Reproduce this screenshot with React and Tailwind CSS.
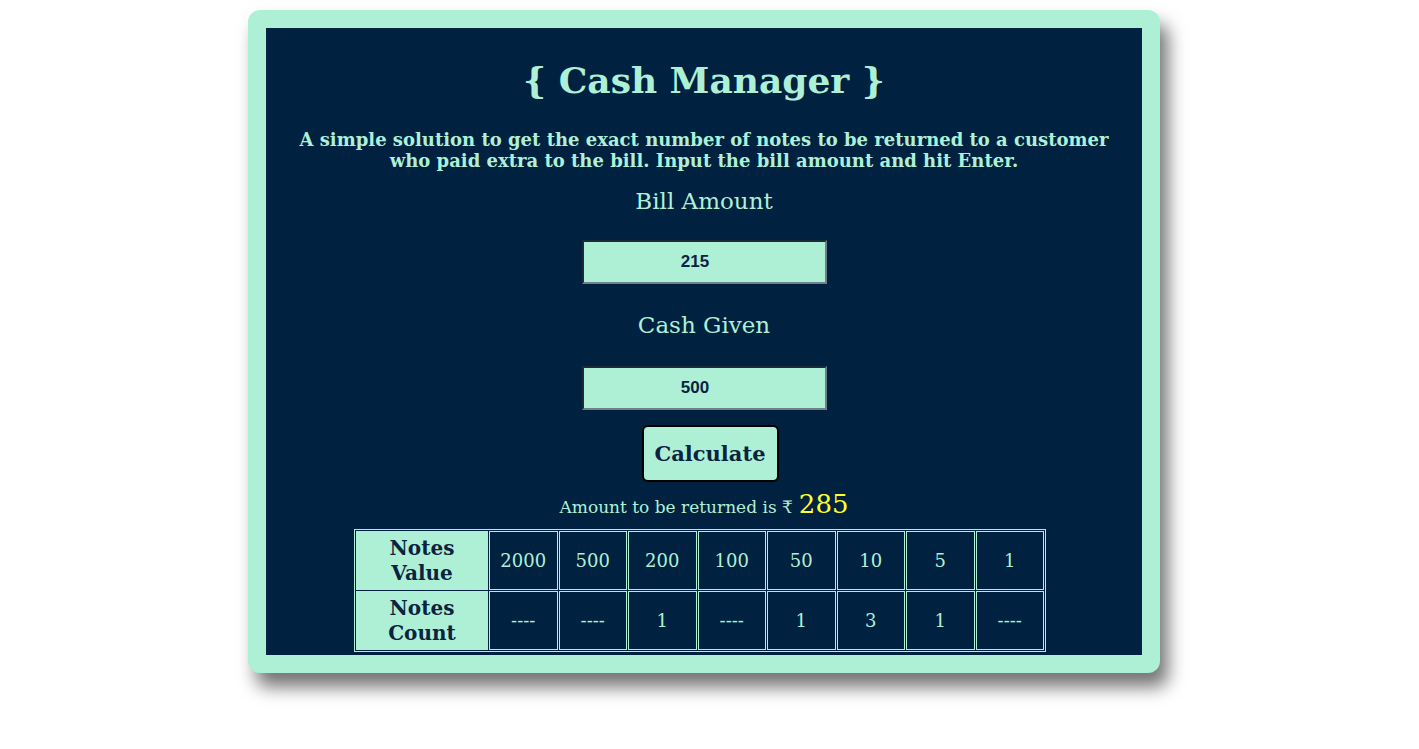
const notes = [2000, 500, 200, 100, 50, 10, 5, 1];
const counts = ["----", "----", "1", "----", "1", "3", "1", "----"];

function NumberInput({ value }) {
  return (
    <input
      type="text"
      defaultValue={value}
      className="w-[245px] h-[44px] pr-[18px] bg-[#aef0d6] text-center text-[17px] font-bold text-[#0b2340] border-2 border-t-[#1b2b3a] border-l-[#1b2b3a] border-b-[#6f8088] border-r-[#6f8088] outline-none"
      style={{ fontFamily: '"Liberation Sans", Arial, sans-serif' }}
    />
  );
}

export default function App() {
  return (
    <div className="w-full min-h-[749px] bg-white pt-[10px] pr-[11px] flex justify-center" style={{ fontFamily: '"DejaVu Serif", Georgia, serif' }}>
      <div className="w-[912px] h-[663px] bg-[#aef0d6] rounded-[12px] p-[18px] shadow-[8px_14px_18px_rgba(0,0,0,0.55)]">
        <div className="h-full bg-[#012140] flex flex-col items-center text-[#aef0d6]">
          <h1 className="mt-[26px] text-[36px] leading-[52px] font-bold">{"{ Cash Manager }"}</h1>
          <p className="mt-[23px] w-[822px] text-center text-[18px] leading-[21px] font-bold">
            A simple solution to get the exact number of notes to be returned to a customer who paid extra to the bill. Input the bill amount and hit Enter.
          </p>
          <label className="mt-[14px] text-[23px] leading-[32px]">Bill Amount</label>
          <div className="mt-[23px]">
            <NumberInput value="215" />
          </div>
          <label className="mt-[25px] text-[23px] leading-[32px]">Cash Given</label>
          <div className="mt-[25px]">
            <NumberInput value="500" />
          </div>
          <button className="mt-[15px] ml-[12px] w-[137px] h-[57px] bg-[#aef0d6] border-2 border-black rounded-[6px] text-[21px] font-bold text-[#0b2340]">
            Calculate
          </button>
          <div className="mt-[3px] flex items-baseline gap-[6px]">
            <span className="text-[17px]">Amount to be returned is ₹</span>
            <span className="text-[26px] text-[#ffff2e]">285</span>
          </div>
          <div className="mt-[5px] pr-[8px]">
            <table className="w-[692px] table-fixed border-separate border-spacing-[1px] border border-[#aef0d6]">
              <colgroup>
                <col className="w-[132px]" />
                {notes.map((n) => (
                  <col key={n} />
                ))}
              </colgroup>
              <tbody>
                <tr>
                  <th className="h-[59px] bg-[#aef0d6] border border-[#aef0d6] text-[#0b2340] text-[20px] leading-[25px] font-bold">
                    Notes<br />Value
                  </th>
                  {notes.map((n) => (
                    <td key={n} className="h-[59px] border border-[#aef0d6] text-center text-[18px]">
                      {n}
                    </td>
                  ))}
                </tr>
                <tr>
                  <th className="h-[59px] bg-[#aef0d6] border border-[#aef0d6] text-[#0b2340] text-[20px] leading-[25px] font-bold">
                    Notes<br />Count
                  </th>
                  {counts.map((c, i) => (
                    <td key={i} className="h-[59px] border border-[#aef0d6] text-center text-[18px]">
                      {c}
                    </td>
                  ))}
                </tr>
              </tbody>
            </table>
          </div>
        </div>
      </div>
    </div>
  );
}
